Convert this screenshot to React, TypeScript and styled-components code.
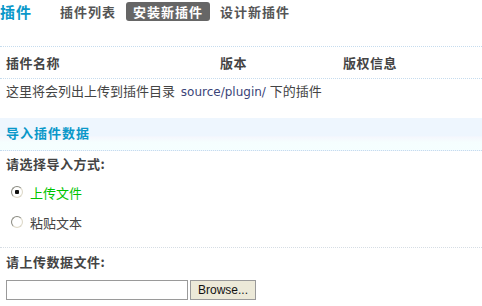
import styled, { createGlobalStyle } from 'styled-components';

const GlobalStyle = createGlobalStyle`
  html, body {
    margin: 0;
    padding: 0;
    background: #fff;
  }
  body {
    font-family: "Noto Sans CJK SC", "DejaVu Sans", sans-serif;
    font-size: 13px;
    color: #444;
  }
`;

const TABS = [
  { label: '插件列表', active: false },
  { label: '安装新插件', active: true },
  { label: '设计新插件', active: false },
];

const COLUMNS = ['插件名称', '版本', '版权信息'];

export default function App() {
  return (
    <>
      <GlobalStyle />
      <Page>
        <Nav>
          <Title>插件</Title>
          <Tabs>
            {TABS.map((tab) => (
              <Tab key={tab.label} $active={tab.active}>
                {tab.label}
              </Tab>
            ))}
          </Tabs>
        </Nav>

        <HeaderRow>
          {COLUMNS.map((col) => (
            <HeaderCell key={col}>{col}</HeaderCell>
          ))}
        </HeaderRow>
        <InfoRow>
          这里将会列出上传到插件目录<Path> source/plugin/ </Path>下的插件
        </InfoRow>

        <SectionTitle>导入插件数据</SectionTitle>

        <Label>请选择导入方式:</Label>
        <Choice>
          <Radio type="radio" name="mode" defaultChecked />
          <ChoiceText $active>上传文件</ChoiceText>
        </Choice>
        <Choice>
          <Radio type="radio" name="mode" />
          <ChoiceText>粘贴文本</ChoiceText>
        </Choice>

        <Divider />

        <Label $tall>请上传数据文件:</Label>
        <FileRow>
          <FileInput type="text" readOnly />
          <BrowseButton type="button">Browse...</BrowseButton>
        </FileRow>
      </Page>
    </>
  );
}

const Page = styled.div`
  width: 482px;
  display: flex;
  flex-direction: column;
`;

const Nav = styled.div`
  height: 44px;
  padding-top: 2px;
  display: flex;
  align-items: flex-start;
`;

const Title = styled.h1`
  margin: 0 21px 0 0;
  width: 32px;
  font-size: 15px;
  line-height: 19px;
  font-weight: 700;
  letter-spacing: 1px;
  color: #0a98c9;
`;

const Tabs = styled.div`
  display: flex;
  gap: 3px;
`;

const Tab = styled.span<{ $active?: boolean }>`
  padding: 0 7px;
  height: 19px;
  line-height: 19px;
  font-size: 13px;
  font-weight: 700;
  letter-spacing: 1px;
  border-radius: 3px;
  color: ${(p) => (p.$active ? '#fff' : '#555')};
  background: ${(p) => (p.$active ? '#666' : 'transparent')};
`;

const HeaderRow = styled.div`
  display: grid;
  grid-template-columns: 214px 123px 1fr;
  padding-left: 6px;
  height: 31px;
  align-items: center;
  border-top: 1px dotted #c6dcee;
  border-bottom: 1px dotted #c6dcee;
`;

const HeaderCell = styled.div`
  font-size: 13px;
  font-weight: 700;
  letter-spacing: 0.5px;
  color: #444;
`;

const InfoRow = styled.div`
  padding-left: 6px;
  height: 23px;
  line-height: 23px;
  margin-bottom: 16px;
  color: #444;
`;

const Path = styled.span`
  font-family: "DejaVu Sans", sans-serif;
  font-size: 12px;
  color: #3b4478;
  white-space: pre;
  margin-left: 2px;
`;

const SectionTitle = styled.h2`
  margin: 0;
  height: 32px;
  line-height: 30px;
  padding-left: 6px;
  font-size: 13px;
  font-weight: 700;
  letter-spacing: 1px;
  color: #0a98c9;
  background: linear-gradient(#eef6fe 0%, #eef6fe 55%, #f5f7fd 60%, #f5fefe 75%, #f5ffff 100%);
  border-bottom: 1px dotted #c6dcee;
`;

const Label = styled.div<{ $tall?: boolean }>`
  padding-left: 6px;
  height: ${(p) => (p.$tall ? 28 : 26)}px;
  line-height: ${(p) => (p.$tall ? 28 : 26)}px;
  font-size: 13px;
  font-weight: 700;
  letter-spacing: 0.5px;
  color: #444;
`;

const Choice = styled.label`
  display: flex;
  align-items: center;
  height: 30px;
  padding-left: 11px;
  gap: 7px;
`;

const Radio = styled.input`
  appearance: none;
  margin: 0;
  width: 12px;
  height: 12px;
  border-radius: 50%;
  border: 1px solid #8a8a82;
  border-right-color: #ddd8c8;
  border-bottom-color: #ddd8c8;
  background: radial-gradient(circle, #fff 55%, #f1efe5 100%);
  box-sizing: border-box;
  display: grid;
  place-items: center;

  &:checked {
    background: radial-gradient(circle, #111 0 2px, #fff 2.5px 55%, #f1efe5 100%);
  }
`;

const ChoiceText = styled.span<{ $active?: boolean }>`
  font-size: 13px;
  color: ${(p) => (p.$active ? '#00c400' : '#444')};
`;

const Divider = styled.hr`
  margin: 10px 0 0;
  border: 0;
  border-top: 1px dotted #d6dde4;
  height: 0;
`;

const FileRow = styled.div`
  display: flex;
  gap: 2px;
  padding-left: 6px;
  margin-top: 4px;
`;

const FileInput = styled.input`
  width: 182px;
  height: 20px;
  box-sizing: border-box;
  border: 1px solid #9a9a9a;
  padding: 0 2px;
  margin: 0;
  background: #fff;
  outline: none;
`;

const BrowseButton = styled.button`
  width: 66px;
  height: 20px;
  box-sizing: border-box;
  margin: 0;
  padding: 0;
  border: 1px solid #9a9a9a;
  background: #ece9d8;
  font-family: "Liberation Sans", Arial, sans-serif;
  font-size: 12px;
  color: #111;
`;
